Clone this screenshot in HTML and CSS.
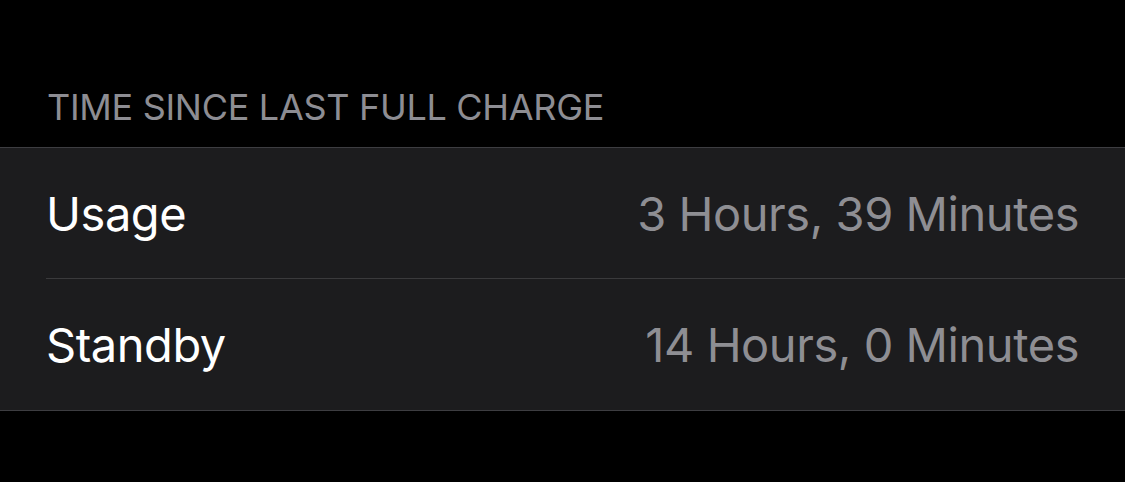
FILE: index.html
```html
<!DOCTYPE html>
<html lang="en">
<head>
<meta charset="utf-8">
<title>Battery</title>
<link rel="stylesheet" href="styles.css">
</head>
<body>
  <div class="section-header">TIME SINCE LAST FULL CHARGE</div>
  <ul class="group">
    <li class="row">
      <span class="label">Usage</span>
      <span class="value">3 Hours, 39 Minutes</span>
    </li>
    <li class="row">
      <span class="label">Standby</span>
      <span class="value">14 Hours, 0 Minutes</span>
    </li>
  </ul>
</body>
</html>
```
FILE: styles.css
```css
html, body {
  margin: 0;
  padding: 0;
  background: #000;
  height: 100%;
}

body {
  font-family: Inter, "Noto Sans", "Liberation Sans", sans-serif;
  -webkit-font-smoothing: antialiased;
}

.section-header {
  height: 147px;
  box-sizing: border-box;
  padding: 0 47px 18px;
  display: flex;
  align-items: flex-end;
  font-size: 36px;
  line-height: 44px;
  letter-spacing: -0.3px;
  color: #8d8d93;
}

.group {
  list-style: none;
  margin: 0;
  padding: 0;
  background: #1c1c1e;
  border-top: 1px solid #3d3d41;
  border-bottom: 1px solid #3d3d41;
}

.row {
  height: 130px;
  margin-left: 46px;
  padding-right: 46px;
  display: flex;
  align-items: center;
  justify-content: space-between;
  font-size: 47px;
  letter-spacing: -0.45px;
}

.row + .row {
  border-top: 1px solid #3a3a3c;
  height: 131px;
}

.label {
  color: #fff;
}

.value {
  color: #8e8e93;
}
```
